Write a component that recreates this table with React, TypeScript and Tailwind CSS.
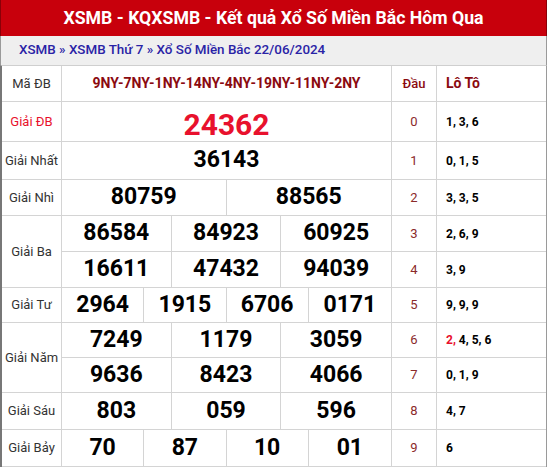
import React from "react";

const font = { fontFamily: "Roboto, 'Noto Sans', Arial, sans-serif" };

const numCls = "font-bold text-[23px] text-black";

function Cells({ nums, h, big }: { nums: string[]; h: string; big?: boolean }) {
  const cols =
    nums.length === 1
      ? "grid-cols-1"
      : nums.length === 2
      ? "grid-cols-2"
      : nums.length === 3
      ? "grid-cols-3"
      : "grid-cols-4";
  return (
    <div className={`grid ${cols} ${h}`}>
      {nums.map((n, i) => (
        <div
          key={i}
          className={`flex items-center justify-center ${
            i < nums.length - 1 ? "border-r border-[#d4d4d4]" : ""
          } ${big ? "font-bold text-[30px] text-[#e8112d]" : numCls}`}
        >
          {n}
        </div>
      ))}
    </div>
  );
}

export default function App() {
  const rows: { label: string; red?: boolean; lines: { nums: string[]; h: string; big?: boolean }[] }[] = [
    { label: "Giải ĐB", red: true, lines: [{ nums: ["24362"], h: "h-[39px]", big: true }] },
    { label: "Giải Nhất", lines: [{ nums: ["36143"], h: "h-[37px]" }] },
    { label: "Giải Nhì", lines: [{ nums: ["80759", "88565"], h: "h-[35px]" }] },
    {
      label: "Giải Ba",
      lines: [
        { nums: ["86584", "84923", "60925"], h: "h-[35px]" },
        { nums: ["16611", "47432", "94039"], h: "h-[35px]" },
      ],
    },
    { label: "Giải Tư", lines: [{ nums: ["2964", "1915", "6706", "0171"], h: "h-[34px]" }] },
    {
      label: "Giải Năm",
      lines: [
        { nums: ["7249", "1179", "3059"], h: "h-[34px]" },
        { nums: ["9636", "8423", "4066"], h: "h-[34px]" },
      ],
    },
    { label: "Giải Sáu", lines: [{ nums: ["803", "059", "596"], h: "h-[36px]" }] },
    { label: "Giải Bảy", lines: [{ nums: ["70", "87", "10", "01"], h: "h-[36px]" }] },
  ];

  const loto: { d: string; lo: React.ReactNode; h: string }[] = [
    { d: "0", lo: "1, 3, 6", h: "h-[40px]" },
    { d: "1", lo: "0, 1, 5", h: "h-[38px]" },
    { d: "2", lo: "3, 3, 5", h: "h-[36px]" },
    { d: "3", lo: "2, 6, 9", h: "h-[36px]" },
    { d: "4", lo: "3, 9", h: "h-[36px]" },
    { d: "5", lo: "9, 9, 9", h: "h-[35px]" },
    {
      d: "6",
      lo: (
        <span>
          <span className="text-[#e8112d]">2,</span>
          {" 4, 5, 6"}
        </span>
      ),
      h: "h-[35px]",
    },
    { d: "7", lo: "0, 1, 9", h: "h-[35px]" },
    { d: "8", lo: "4, 7", h: "h-[37px]" },
    { d: "9", lo: "6", h: "h-[37px]" },
  ];

  return (
    <div style={font} className="w-[547px] h-[467px] bg-white overflow-hidden">
      <div className="h-[36px] bg-[#c8000c] border-x border-[#8a0008] flex items-center justify-center text-white font-bold text-[17.7px]">
        XSMB - KQXSMB - Kết quả Xổ Số Miền Bắc Hôm Qua
      </div>
      <div className="h-[29px] bg-[#efefef] border-x border-[#9a9a9a] flex items-center pl-[18px] text-[13.4px] font-medium text-[#2a23a6]">
        XSMB » XSMB Thứ 7 » Xổ Số Miền Bắc 22/06/2024
      </div>
      <div className="flex border-l-2 border-r border-l-[#777] border-r-[#9a9a9a] border-t border-t-[#cfcfcf]">
        <div className="w-[390px] border-r border-[#d4d4d4]">
          <div className="flex h-[36px] border-b border-[#d4d4d4]">
            <div className="w-[60px] border-r border-[#d4d4d4] flex items-center justify-center text-[13px] text-[#333]">
              Mã ĐB
            </div>
            <div className="flex-1 flex items-center justify-center text-[14px] font-bold text-[#8b0a10]">
              9NY-7NY-1NY-14NY-4NY-19NY-11NY-2NY
            </div>
          </div>
          {rows.map((r, i) => (
            <div key={i} className="flex border-b border-[#d4d4d4]">
              <div
                className={`w-[60px] shrink-0 border-r border-[#d4d4d4] flex items-center justify-center text-[13px] ${
                  r.red ? "text-[#e8112d]" : "text-[#333]"
                }`}
              >
                {r.label}
              </div>
              <div className="flex-1 flex flex-col">
                {r.lines.map((l, j) => (
                  <div key={j} className={j < r.lines.length - 1 ? "border-b border-[#d4d4d4]" : ""}>
                    <Cells nums={l.nums} h={l.h} big={l.big} />
                  </div>
                ))}
              </div>
            </div>
          ))}
        </div>
        <div className="flex-1">
          <div className="flex h-[36px] border-b border-[#d4d4d4]">
            <div className="w-[45px] border-r border-[#d4d4d4] flex items-center justify-center text-[13px] font-medium text-[#8b0a10]">
              Đầu
            </div>
            <div className="flex-1 flex items-center pl-[9px] text-[14px] font-bold text-[#8b0a10]">
              Lô Tô
            </div>
          </div>
          {loto.map((r, i) => (
            <div key={i} className={`flex ${r.h} border-b border-[#d4d4d4]`}>
              <div className="w-[45px] border-r border-[#d4d4d4] flex items-center justify-center text-[13px] text-[#8b2a2a]">
                {r.d}
              </div>
              <div className="flex-1 flex items-center pl-[9px] text-[12px] font-bold text-black">
                {r.lo}
              </div>
            </div>
          ))}
        </div>
      </div>
    </div>
  );
}
